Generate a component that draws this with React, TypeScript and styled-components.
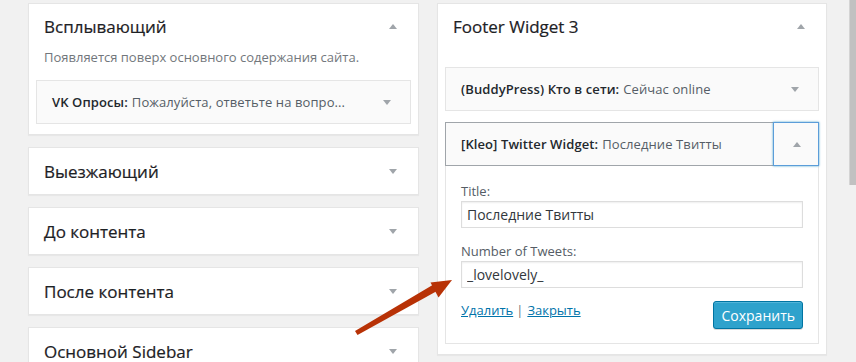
import React from "react";
import styled, { createGlobalStyle } from "styled-components";

const GlobalStyle = createGlobalStyle`
    html, body {
        margin: 0;
        background: #f1f1f1;
        font-family: "Open Sans", "Noto Sans", sans-serif;
        color: #444;
    }
`;

const Page = styled.div`
    position: relative;
    display: flex;
    align-items: flex-start;
    gap: 18px;
    height: 362px;
    padding: 3px 0 0 28px;
    box-sizing: border-box;
    overflow: hidden;
`;

const Column = styled.div<{ $width: number }>`
    display: flex;
    flex-direction: column;
    gap: 12px;
    width: ${({ $width }) => $width}px;
    flex-shrink: 0;
`;

const SidebarCard = styled.div<{ $open?: boolean }>`
    background: #fff;
    border: 1px solid #e5e5e5;
    box-shadow: 0 1px 1px rgba(0, 0, 0, 0.04);
    padding-bottom: ${({ $open }) => ($open ? "10px" : "0")};
`;

const SidebarHeader = styled.div<{ $open?: boolean }>`
    display: flex;
    align-items: center;
    justify-content: space-between;
    height: ${({ $open }) => ($open ? "44px" : "46px")};
    padding: 0 21px 0 15px;
    h2 {
        margin: 0;
        font-size: 17px;
        font-weight: 400;
        color: #1d2125;
        -webkit-text-stroke: 0.2px #1d2125;
    }
`;

const Triangle = styled.span<{ $up?: boolean }>`
    width: 0;
    height: 0;
    border-left: 4px solid transparent;
    border-right: 4px solid transparent;
    ${({ $up }) =>
        $up ? "border-bottom: 5px solid #a0a5aa;" : "border-top: 5px solid #a0a5aa;"}
`;

const Description = styled.p`
    margin: 0 15px 14px;
    font-size: 13px;
    line-height: 18px;
    color: #72777c;
`;

const WidgetList = styled.div<{ $top: number }>`
    display: flex;
    flex-direction: column;
    gap: 11px;
    padding: ${({ $top }) => $top}px 7px 0;
`;

const WidgetTop = styled.div<{ $open?: boolean }>`
    display: flex;
    align-items: stretch;
    height: 42px;
    background: #fafafa;
    border: 1px solid ${({ $open }) => ($open ? "#a0a5aa" : "#e5e5e5")};
    border-right-color: ${({ $open }) => ($open ? "#5b9dd9" : "#e5e5e5")};
`;

const WidgetTitle = styled.div`
    flex: 1;
    display: flex;
    align-items: center;
    padding-left: 15px;
    font-size: 13px;
    letter-spacing: 0.1px;
    white-space: nowrap;
    color: #23282d;
    b {
        font-weight: 600;
        margin-right: 4px;
    }
    span {
        color: #555d66;
    }
`;

const Toggle = styled.div<{ $focus?: boolean }>`
    width: 44px;
    display: flex;
    align-items: center;
    justify-content: center;
    border: 1px solid ${({ $focus }) => ($focus ? "#5b9dd9" : "transparent")};
    margin: ${({ $focus }) => ($focus ? "-1px -1px -1px 0" : "0")};
    box-shadow: ${({ $focus }) => ($focus ? "0 0 2px rgba(30, 140, 190, 0.8)" : "none")};
    span {
        margin-left: ${({ $focus }) => ($focus ? "2px" : "0")};
    }
`;

const WidgetInside = styled.div`
    border: 1px solid #e5e5e5;
    border-top: none;
    background: #fff;
    padding: 16px 15px 14px;
`;

const Field = styled.div`
    margin-bottom: 14px;
    label {
        display: block;
        font-size: 13px;
        line-height: 18px;
        margin-bottom: 1px;
        color: #555d66;
    }
`;

const TextInput = styled.input`
    display: block;
    width: 100%;
    height: 27px;
    box-sizing: border-box;
    padding: 0 5px;
    border: 1px solid #ddd;
    box-shadow: inset 0 1px 2px rgba(0, 0, 0, 0.07);
    font-family: inherit;
    font-size: 14px;
    color: #32373c;
    outline: none;
`;

const Actions = styled.div`
    display: flex;
    justify-content: space-between;
    align-items: flex-start;
    margin-top: -1px;
`;

const Links = styled.div`
    font-size: 13px;
    line-height: 18px;
    color: #72777c;
    a {
        color: #0073aa;
        text-decoration: underline;
    }
    em {
        font-style: normal;
        margin: 0 4px 0 3px;
    }
`;

const SaveButton = styled.button`
    height: 28px;
    padding: 0 7px;
    border-radius: 3px;
    background: #2ea2cc;
    border: 1px solid #0074a2;
    box-shadow: inset 0 1px 0 rgba(120, 200, 230, 0.5), 0 1px 0 rgba(0, 0, 0, 0.15);
    color: #fff;
    font-family: inherit;
    font-size: 14px;
`;

const ScrollThumb = styled.div`
    margin-left: auto;
    margin-top: -3px;
    width: 7px;
    height: 185px;
    background: #c1c1c1;
    border-left: 1px solid #d4d4d4;
    box-sizing: border-box;
`;

const Pointer = styled.svg`
    position: absolute;
    left: 0;
    top: 0;
    pointer-events: none;
`;

const ClosedSidebar: React.FC<{ title: string }> = ({ title }) => (
    <SidebarCard>
        <SidebarHeader>
            <h2>{title}</h2>
            <Triangle />
        </SidebarHeader>
    </SidebarCard>
);

const App: React.FC = () => {
    return (
        <>
            <GlobalStyle />
            <Page>
                <Column $width={391}>
                    <SidebarCard $open>
                        <SidebarHeader $open>
                            <h2>Всплывающий</h2>
                            <Triangle $up />
                        </SidebarHeader>
                        <Description>Появляется поверх основного содержания сайта.</Description>
                        <WidgetList $top={0}>
                            <WidgetTop>
                                <WidgetTitle>
                                    <b>VK Опросы:</b>
                                    <span>Пожалуйста, ответьте на вопро...</span>
                                </WidgetTitle>
                                <Toggle>
                                    <Triangle />
                                </Toggle>
                            </WidgetTop>
                        </WidgetList>
                    </SidebarCard>
                    <ClosedSidebar title="Выезжающий" />
                    <ClosedSidebar title="До контента" />
                    <ClosedSidebar title="После контента" />
                    <ClosedSidebar title="Основной Sidebar" />
                </Column>

                <Column $width={390}>
                    <SidebarCard $open>
                        <SidebarHeader $open>
                            <h2>Footer Widget 3</h2>
                            <Triangle $up />
                        </SidebarHeader>
                        <WidgetList $top={19}>
                            <WidgetTop>
                                <WidgetTitle>
                                    <b>(BuddyPress) Кто в сети:</b>
                                    <span>Сейчас online</span>
                                </WidgetTitle>
                                <Toggle>
                                    <Triangle />
                                </Toggle>
                            </WidgetTop>
                            <div>
                                <WidgetTop $open>
                                    <WidgetTitle>
                                        <b>[Kleo] Twitter Widget:</b>
                                        <span>Последние Твитты</span>
                                    </WidgetTitle>
                                    <Toggle $focus>
                                        <Triangle $up />
                                    </Toggle>
                                </WidgetTop>
                                <WidgetInside>
                                    <Field>
                                        <label>Title:</label>
                                        <TextInput defaultValue="Последние Твитты" />
                                    </Field>
                                    <Field>
                                        <label>Number of Tweets:</label>
                                        <TextInput defaultValue="_lovelovely_" />
                                    </Field>
                                    <Actions>
                                        <Links>
                                            <a>Удалить</a>
                                            <em>|</em>
                                            <a>Закрыть</a>
                                        </Links>
                                        <SaveButton>Сохранить</SaveButton>
                                    </Actions>
                                </WidgetInside>
                            </div>
                        </WidgetList>
                    </SidebarCard>
                </Column>

                <ScrollThumb />

                <Pointer width="856" height="362" viewBox="0 0 856 362">
                    <polygon
                        points="355,331 357.5,335 437,291 433.5,284.5"
                        fill="#b83206"
                    />
                    <polygon points="452,280 430.5,282.5 438.5,297.5" fill="#b83206" />
                </Pointer>
            </Page>
        </>
    );
};

export default App;
